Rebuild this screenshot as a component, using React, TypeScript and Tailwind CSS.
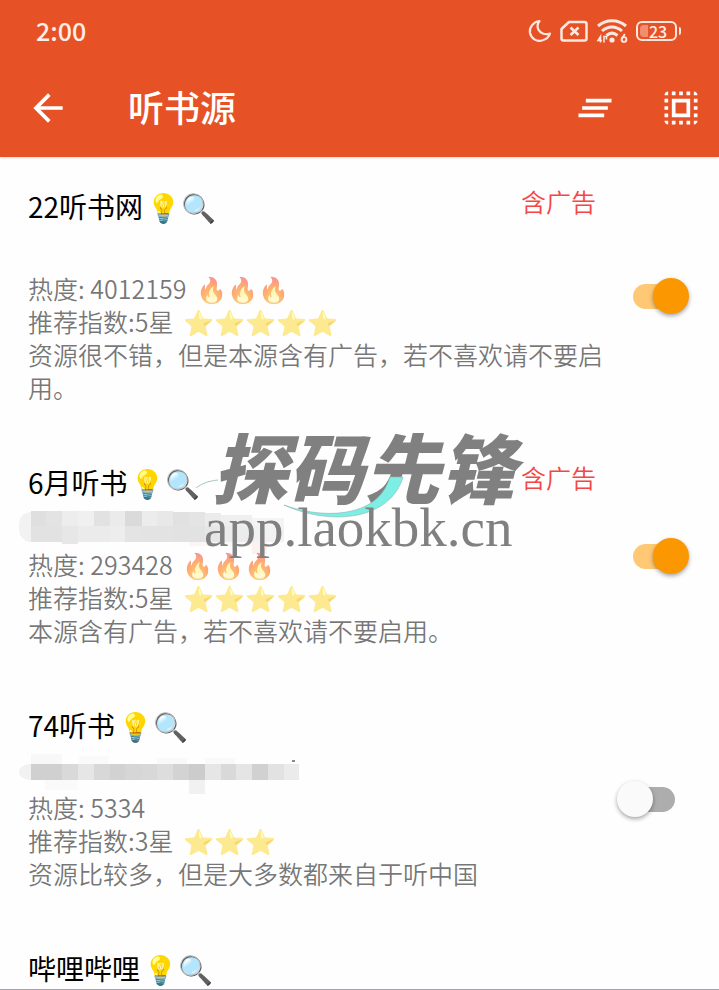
import { useState } from "react";
import { MdArrowBack, MdClearAll, MdSelectAll } from "react-icons/md";

type Cell = [x: number, y: number, w: number, h: number, color: string];

interface Details {
  heat: string;
  flames: number;
  stars: number;
  note: string;
  enabled: boolean;
  mask: Cell[];
}

interface Source {
  name: string;
  hasAds: boolean;
  details?: Details;
}

const maskA: Cell[] = [
  [31, 0, 15, 15, "#dfdfdf"], [46, 0, 16, 15, "#e3e3e3"], [62, 0, 16, 15, "#ededed"], [78, 0, 16, 15, "#f0f0f0"],
  [94, 0, 16, 15, "#e2e2e2"], [110, 0, 15, 15, "#ebebeb"], [125, 0, 17, 15, "#dadada"], [142, 0, 15, 15, "#ececec"],
  [157, 0, 16, 15, "#e8e8e8"], [173, 1, 16, 14, "#e1e1e1"], [189, 1, 16, 14, "#e4e4e4"], [205, 2, 16, 13, "#ebebeb"],
  [221, 4, 31, 11, "#efefef"], [252, 7, 32, 8, "#f4f4f4"],
  [31, 15, 31, 16, "#e2e2e2"], [62, 15, 16, 18, "#e7e7e7"], [78, 15, 32, 16, "#ebebeb"], [110, 15, 15, 16, "#ededed"],
  [125, 15, 17, 16, "#e4e4e4"], [142, 15, 31, 16, "#e3e3e3"], [173, 15, 32, 16, "#e2e2e2"], [205, 15, 16, 16, "#e6e6e6"],
  [221, 15, 31, 16, "#ececec"], [252, 15, 32, 16, "#f2f2f2"], [189, 31, 63, 4, "#fbf5f4"], [252, 31, 15, 12, "#fbf1ef"],
];

const maskB: Cell[] = [
  [31, 0, 31, 10, "#f8f8f8"], [79, 2, 30, 8, "#fafafa"], [157, 4, 30, 6, "#f9f9f9"], [205, 4, 30, 6, "#f9f9f9"],
  [31, 10, 31, 16, "#d0d0d0"], [62, 10, 16, 16, "#d9d9d9"], [78, 10, 16, 16, "#e6e6e6"], [94, 10, 16, 16, "#d8d8d8"],
  [110, 10, 15, 16, "#d2d2d2"], [125, 10, 17, 16, "#d6d6d6"], [142, 10, 15, 16, "#d8d8d8"], [157, 10, 16, 16, "#dddddd"],
  [173, 10, 16, 16, "#d3d3d3"], [189, 10, 16, 16, "#cccccc"], [205, 10, 16, 16, "#e6e6e6"], [221, 10, 15, 16, "#d9d9d9"],
  [236, 10, 16, 16, "#e5e5e5"], [252, 10, 16, 16, "#d1d1d1"], [268, 10, 16, 16, "#e2e2e2"], [284, 10, 15, 16, "#ebebeb"],
  [45, 26, 33, 10, "#fafafa"], [189, 26, 16, 14, "#f1f1f1"], [292, 6, 3, 2, "#8a8a8a"],
];

const sources: Source[] = [
  { name: "22听书网", hasAds: true, details: { heat: "4012159", flames: 3, stars: 5, note: "资源很不错，但是本源含有广告，若不喜欢请不要启用。", enabled: true, mask: [] } },
  { name: "6月听书", hasAds: true, details: { heat: "293428", flames: 3, stars: 5, note: "本源含有广告，若不喜欢请不要启用。", enabled: true, mask: maskA } },
  { name: "74听书", hasAds: false, details: { heat: "5334", flames: 0, stars: 3, note: "资源比较多，但是大多数都来自于听中国", enabled: false, mask: maskB } },
  { name: "哔哩哔哩", hasAds: false },
];

function StatusBar() {
  return (
    <div className="flex h-[62px] items-center justify-between pr-[38px] pl-9">
      <span className="text-[25px] font-medium text-white/90">2:00</span>
      <div className="flex items-center gap-2">
        <svg className="h-6 w-6" viewBox="0 0 24 24" fill="none" stroke="#fde8e0" strokeWidth="2.200" strokeLinejoin="round">
          <path d="M11.500 2C5 3 1 8.500 2 14c1.200 5.500 6.500 9 12 7.500 4-1 7-3.500 8-7-4.500 1.500-9.500.3-11.500-3.700-1.500-3-.8-6.500 1-8.800z" />
        </svg>
        <svg className="h-6 w-7" viewBox="0 0 28 24" fill="none" stroke="#fde8e0" strokeWidth="2.500" strokeLinejoin="round">
          <path d="M9 3h15.500a2 2 0 0 1 2 2v14.500a2 2 0 0 1-2 2H3.500a2 2 0 0 1-2-2V10z" />
          <path d="M10.500 8.500l8 7.500M18.500 8.500l-8 7.500" strokeWidth="2.600" />
        </svg>
        <svg className="h-6 w-8" viewBox="0 0 32 24" fill="none" stroke="#fde8e0" strokeWidth="3">
          <path d="M2 7c8-7 20-7 28 0M6 12c6-5.500 14-5.500 20 0M10.500 16.500c3.500-3 7.500-3 11 0" />
          <circle cx="16" cy="21" r="2.600" fill="#fde8e0" stroke="none" />
          <path d="M4.500 23.500v-6l-2.500 4h4M8 23.500v-6h2.500v3" strokeWidth="1.600" />
          <circle cx="28" cy="20.500" r="2.400" strokeWidth="1.900" />
          <path d="M25.800 20l3-5" strokeWidth="1.800" />
        </svg>
        <div className="flex items-center gap-0.5">
          <div className="flex h-5 w-[41px] items-center gap-px rounded-md border-2 border-[#fde8e0] pl-0.5 text-base leading-4 text-white/90">
            <span className="h-3 w-2 rounded-l-sm bg-white/35" />
            <span className="font-medium">23</span>
          </div>
          <span className="h-2 w-0.5 rounded-r bg-[#fde8e0]" />
        </div>
      </div>
    </div>
  );
}

function Mask({ cells }: { cells: Cell[] }) {
  return (
    <svg className="-ml-7 h-[33px] w-[300px] overflow-visible" viewBox="0 0 300 33" aria-hidden="true" shapeRendering="crispEdges">
      {cells.length > 0 && <rect x="19" y={cells === maskA ? 1 : 10} width="24" height={cells === maskA ? 30 : 16} rx="12" fill="#f2f2f2" />}
      {cells.map(([x, y, w, h, color]) => (
        <rect key={`${x}-${y}`} x={x} y={y} width={w} height={h} fill={color} />
      ))}
    </svg>
  );
}

function Toggle({ label, initial }: { label: string; initial: boolean }) {
  const [on, setOn] = useState(initial);
  return (
    <input
      type="checkbox"
      role="switch"
      aria-label={label}
      checked={on}
      onChange={() => setOn(!on)}
      className="relative mt-2 h-[25px] w-[42px] shrink-0 cursor-pointer appearance-none rounded-full bg-[#adadad] before:absolute before:-top-1.5 before:-left-4 before:size-9 before:rounded-full before:bg-[#fafafa] before:shadow-[0_2px_4px_rgba(0,0,0,0.35)] checked:bg-[#ffc875] checked:before:left-5 checked:before:bg-[#fb9700]"
    />
  );
}

function Row({ source: { name, hasAds, details } }: { source: Source }) {
  return (
    <li className="flex items-center justify-between pt-6 pr-11 pb-[29px] pl-7">
      <div className="w-full max-w-[576px]">
        <div className="flex h-[50px] justify-between pr-2">
          <h2 className="text-[28px] leading-[50px] text-black">{name}<span className="ml-[3px]">💡🔍</span></h2>
          {hasAds && <span className="text-[25px] leading-10 font-[350] text-[#f54545]">含广告</span>}
        </div>
        {details && (
          <>
            <div className="mt-1 h-[37px]">
              <Mask cells={details.mask} />
            </div>
            <div className="relative text-[25px] leading-[33px] font-[350] text-black/55">
              <p>热度: {details.heat} <span className="ml-1">{"🔥".repeat(details.flames)}</span></p>
              <p>推荐指数:{details.stars}星 <span className="ml-1">{"⭐".repeat(details.stars)}</span></p>
              <p>{details.note}</p>
            </div>
          </>
        )}
      </div>
      {details && <Toggle label={name} initial={details.enabled} />}
    </li>
  );
}

function Watermark() {
  return (
    <div className="pointer-events-none absolute top-[416px] left-[196px] w-[340px] text-[#808080]">
      <div className="pl-4 text-[76px] leading-[98px] font-black whitespace-nowrap italic">探码先锋</div>
      <svg className="absolute top-1 left-0 h-[120px] w-[340px]" viewBox="0 0 340 120" aria-hidden="true">
        <path d="M88 85c38 14 94 14 106-28h13c-12 42-70 50-119 28z" fill="#7deee4" stroke="#8fb5b5" strokeWidth="0.600" />
        <path d="M0 68c5-4 12-7 22-8" fill="none" stroke="#a9c6c6" />
      </svg>
      <div className="relative -mt-4 pl-2 font-['Liberation_Serif',serif] text-[55px] leading-[60px] whitespace-nowrap">app.laokbk.cn</div>
    </div>
  );
}

export default function App() {
  return (
    <div className="relative h-screen overflow-hidden border-b border-[#a5a5ab] bg-[#fefefe] font-['Noto_Sans_CJK_SC','Noto_Color_Emoji',sans-serif]">
      <header className="h-[157px] bg-[#e65226] text-white shadow">
        <StatusBar />
        <div className="flex h-[92px] items-center pr-4 pl-[26px]">
          <button type="button" aria-label="返回"><MdArrowBack className="size-11" /></button>
          <h1 className="ml-[58px] flex-1 pb-1 text-[36px] leading-[88px] font-medium">听书源</h1>
          <button type="button" aria-label="清空"><MdClearAll className="size-11" /></button>
          <button type="button" aria-label="全选" className="ml-[42px]"><MdSelectAll className="size-11" /></button>
        </div>
      </header>
      <ul>
        {sources.map((source) => <Row key={source.name} source={source} />)}
      </ul>
      <Watermark />
    </div>
  );
}
